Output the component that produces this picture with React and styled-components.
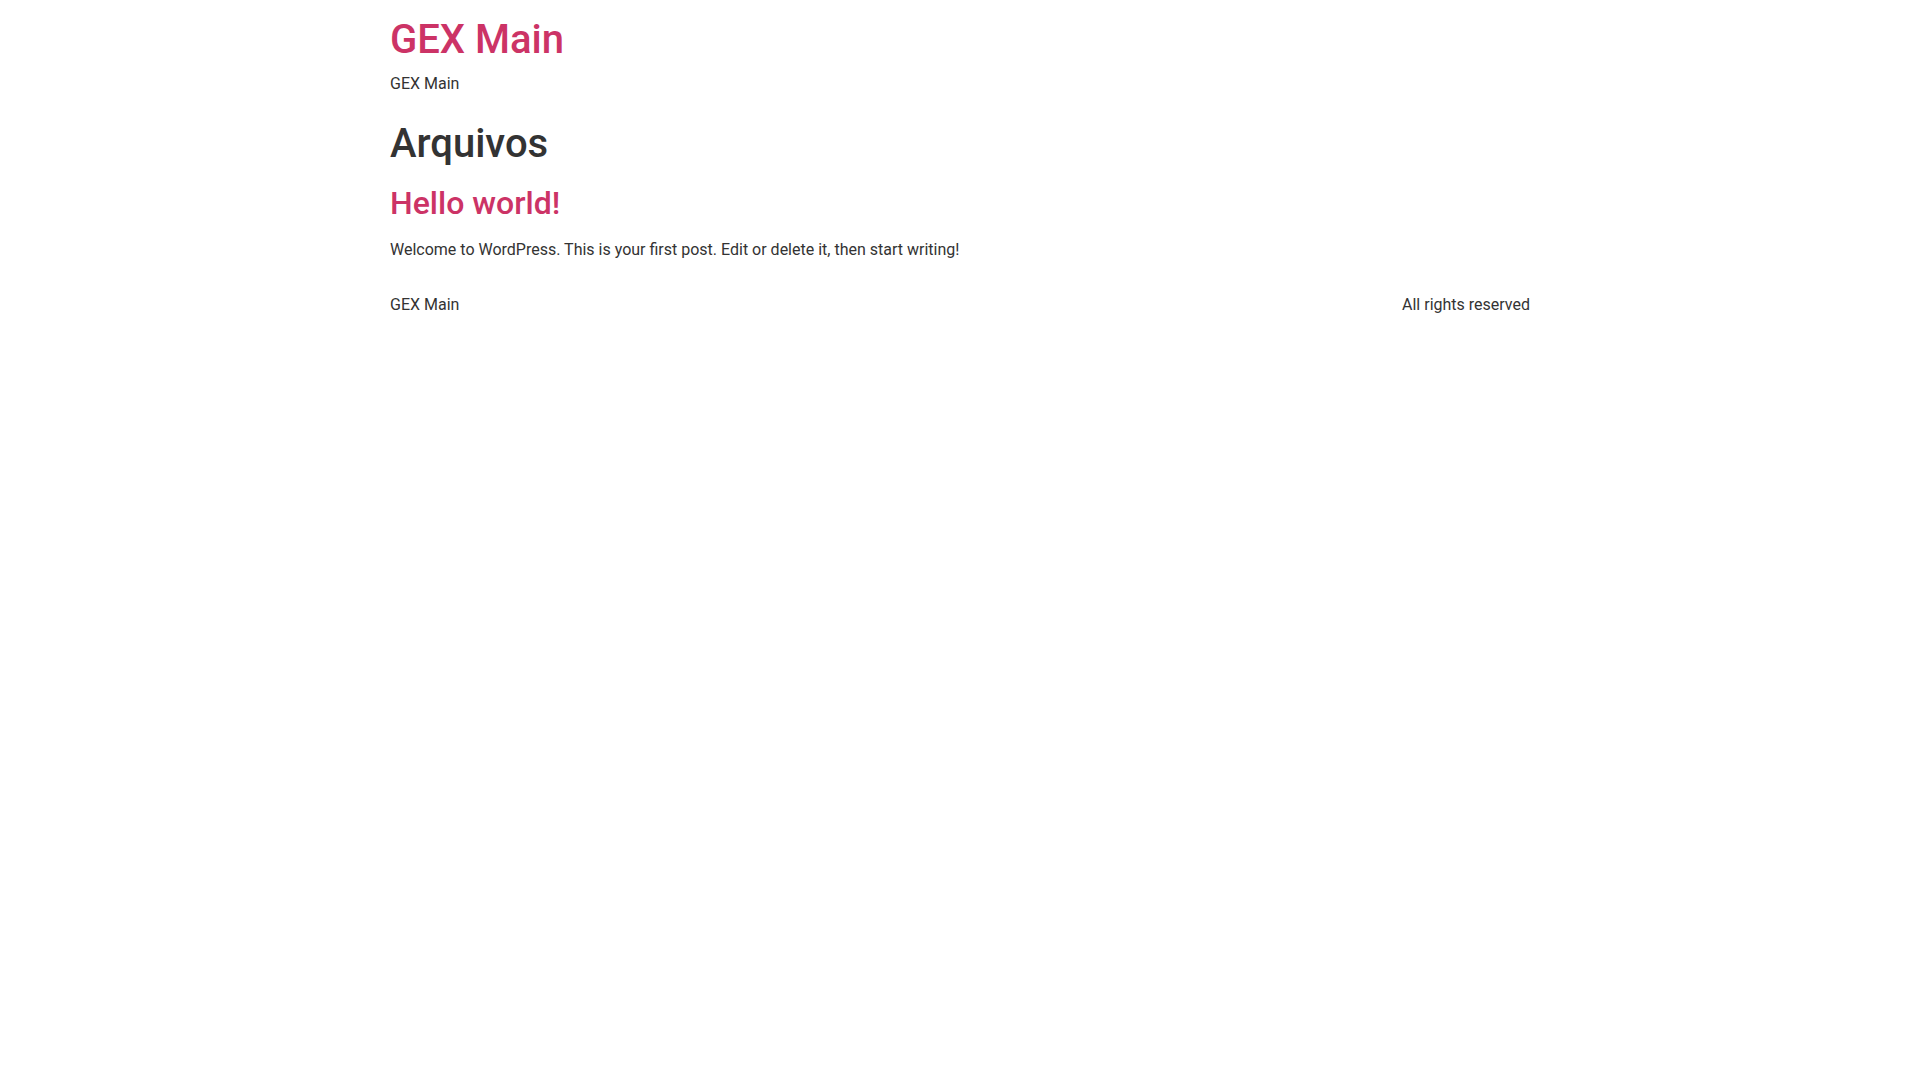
import React from 'react';
import styled, { createGlobalStyle } from 'styled-components';

const GlobalStyle = createGlobalStyle`
	html, body {
		margin: 0;
		padding: 0;
		background: #fff;
	}
	body {
		font-family: Roboto, "Liberation Sans", Arial, sans-serif;
		font-size: 16px;
		line-height: 1.5;
		color: #333;
	}
	a {
		color: #c36;
		text-decoration: none;
	}
`;

const Page = styled.div`
	width: 1140px;
	margin: 0 auto;
	display: flex;
	flex-direction: column;
`;

const Header = styled.header`
	display: flex;
	flex-direction: column;
	padding-top: 16px;
`;

const SiteTitle = styled.h1`
	margin: 0 0 8px;
	font-size: 40px;
	font-weight: 500;
	line-height: 1.2;
`;

const Description = styled.p`
	margin: 0;
`;

const PageTitle = styled.h1`
	margin: 24px 0 0;
	font-size: 40px;
	font-weight: 500;
	line-height: 1.2;
	color: #333;
`;

const Post = styled.article`
	display: flex;
	flex-direction: column;
	margin-top: 16px;
`;

const PostTitle = styled.h2`
	margin: 0;
	font-size: 32px;
	font-weight: 500;
	line-height: 1.2;
`;

const Excerpt = styled.p`
	margin: 16px 0 0;
`;

const Footer = styled.footer`
	display: flex;
	justify-content: space-between;
	align-items: center;
	margin-top: 31px;
`;

const FooterText = styled.p`
	margin: 0;
`;

export default function App() {
	return (
		<>
			<GlobalStyle />
			<Page>
				<Header>
					<SiteTitle>
						<a href="#">GEX Main</a>
					</SiteTitle>
					<Description>GEX Main</Description>
				</Header>
				<main>
					<PageTitle>Arquivos</PageTitle>
					<Post>
						<PostTitle>
							<a href="#">Hello world!</a>
						</PostTitle>
						<Excerpt>Welcome to WordPress. This is your first post. Edit or delete it, then start writing!</Excerpt>
					</Post>
				</main>
				<Footer>
					<FooterText>GEX Main</FooterText>
					<FooterText>All rights reserved</FooterText>
				</Footer>
			</Page>
		</>
	);
}
